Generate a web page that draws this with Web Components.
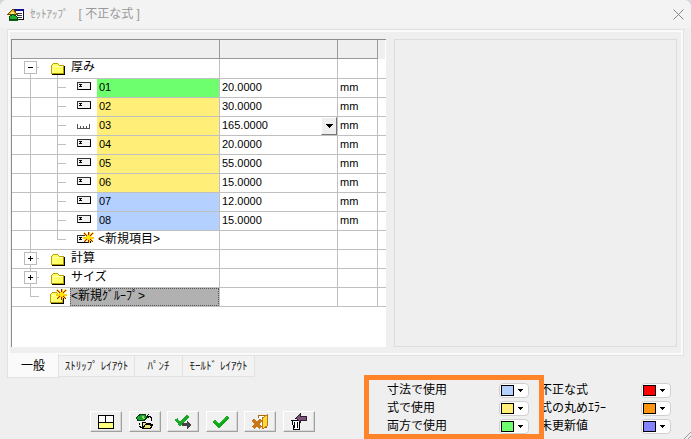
<!DOCTYPE html>
<html lang="ja">
<head>
<meta charset="utf-8">
<title>セットアップ</title>
<style>
  html, body { margin: 0; min-height: 100%; }
  body { background: #cfd8dd; font: 12px/18px "Liberation Sans", "Noto Sans CJK JP", sans-serif; color: #000; }
</style>
</head>
<body>
<setup-window></setup-window>
<script>
const BURST = '<path d="M1 1l9 9M10 1l-9 9M5.5 0v11M0 5.5h11" stroke="#ffd000" stroke-width="2"/><path d="M1 1l3 3M10 1l-3 3M1 10l3-3M10 10l-3-3M5.5 0v3M5.5 8v3" stroke="#a02000"/><rect x="4" y="4" width="3" height="3" fill="#ffe800"/>';
const FIELD = '<path d="M.5 .5h13v7h-13z" fill="#f4f4f4" stroke="#333"/><path d="M1 7.5h12.5v-7" fill="none" stroke="#000"/><path d="M2 2h1v1h-1zM4 2h1v1h-1zM3 3h1v1h-1zM2 4h3v1h-3zM3 2h1v1h-1z" fill="#000"/>';
const FOLDER = '<path d="M.5 10.5v-8l2-2h4l2 2h4v8z" fill="#ffff66" stroke="#b8a000"/><path d="M1 11.5h13M13.5 3v9" stroke="#000" fill="none"/><path d="M2 3.5h10M2 4v6" stroke="#ffffb8" fill="none"/>';

const ICONS = {
  app: [16, 13, '<path d="M6 1h10v11h-10z" fill="#111"/><path d="M8 3h7v8h-7z" fill="#fff"/><path d="M7 1h9v2h-9z" fill="#10109a"/><path d="M9 5.5h5M9 7.5h5M9 9.5h5" stroke="#334"/><path d="M0 6l5-5 4 5z" fill="#f0b020" stroke="#70500c"/><path d="M3 4h3v2h-3z" fill="#fff080"/><path d="M1 11c0-6 8-5 9 0z" fill="#20b030" stroke="#064a10"/><path d="M1 12h9" stroke="#0a6018"/>'],
  field: [14, 8, FIELD],
  ruler: [13, 5, '<path d="M.5 0v4.5h12V0M3.5 2v2M6.5 2v2M9.5 2v2" fill="none" stroke="#555"/>'],
  newfield: [17, 11, '<g transform="translate(0 2)">' + FIELD + '</g><g transform="translate(6 -1)">' + BURST + '</g>'],
  folder: [14, 12, FOLDER],
  newfolder: [17, 14, '<g transform="translate(0 2)">' + FOLDER + '</g><g transform="translate(6 -1)">' + BURST + '</g>'],
  layout: [16, 14, '<path d="M1 1h14v6h-14z" fill="#fff"/><path d="M1 7h14v6h-14z" fill="#ffff80"/><path d="M.5 .5h15v13h-15zM1 7.5h14M7.5 1v6" fill="none" stroke="#000"/>'],
  swap: [17, 16, '<path d="M0 4l4-3.5h5l2 3-3 3h-6z" fill="#20a030" stroke="#064010"/><path d="M6 2h2l1 3h-2z" fill="#90e060"/><path d="M13 0l-2 2 2 2M12 2c3 0 4 2 3 5M3.500 9v2M3.5 12l2 2" fill="none" stroke="#000"/><path d="M6.5 14.5v-6h3l1 1h4v2M6.5 14.5l3-4h7l-2 4z" fill="#e8e070" stroke="#000"/>'],
  apply: [17, 14, '<path d="M1 4l4 5 8-8" fill="none" stroke="#18a828" stroke-width="3"/><path d="M7 8v3h5v3l5-4-5-4v2z" fill="#444"/>'],
  ok: [17, 12, '<path d="M1 5l5 5 9-9" fill="none" stroke="#10a818" stroke-width="3"/><path d="M1 4l5 4 9-8" fill="none" stroke="#28b830"/>'],
  exit: [16, 16, '<path d="M6.5 4v-3h8v12h-4" fill="#fff" stroke="#a86a10"/><path d="M10 4l5-3v11l-5 3z" fill="#ffd840" stroke="#b87810"/><path d="M1 6l8 8M9 6l-8 8" stroke="#c87818" stroke-width="3"/>'],
  remove: [15, 16, '<path d="M1.5 6.5h7v9h-6zM0 6.5h10M3.5 4.5h3M3.5 8v6M6.5 8v6" fill="#fff" stroke="#000"/><path d="M5 4l4-4v2h6v4h-6v2z" fill="#80507c" stroke="#302030"/>'],
  close: [11, 11, '<path d="M.5 .5l10 10M10.5 .5l-10 10" stroke="#858585" fill="none" shape-rendering="auto"/>'],
  down: [7, 4, '<path d="M0 0h7l-3.5 4z" fill="#000"/>'],
  grip: [7, 7, '<path d="M0 7l7-7M4 7l3-3" stroke="#999" stroke-width="1" shape-rendering="auto"/>']
};

class Base extends HTMLElement {
  connectedCallback() {
    const t = document.createElement('template');
    t.innerHTML = `<style>*{box-sizing:border-box}${this.css()}</style>${this.html()}`;
    this.attachShadow({ mode: 'open' }).append(t.content.cloneNode(true));
  }
  css() { return ''; }
}

customElements.define('px-icon', class extends Base {
  css() { return ':host{display:inline-flex;flex:none} svg{display:block;overflow:visible}'; }
  html() {
    const [w, h, body] = ICONS[this.getAttribute('name')];
    return `<svg width="${w}" height="${h}" viewBox="0 0 ${w} ${h}" fill="none" shape-rendering="crispEdges" aria-hidden="true">${body}</svg>`;
  }
});

customElements.define('title-bar', class extends Base {
  css() { return `:host{display:flex;align-items:center;height:28px;margin-bottom:1px;padding:0 7px 0 8px;background:#f3f3f3;color:#999}
    h1{flex:1;margin:0 0 0 6px;font:inherit;white-space:pre} .k{font-size:11px}
    button{border:0;background:none;padding:0;display:flex}`; }
  html() { return `<px-icon name="app"></px-icon><h1><span class="k">ｾｯﾄｱｯﾌﾟ</span>   [ 不正な式 ]</h1><button aria-label="閉じる"><px-icon name="close"></px-icon></button>`; }
});

customElements.define('tree-cell', class extends Base {
  css() { return `:host{display:flex;height:100%;--l:#c0c0c0}
    .gut{display:block;flex:none;position:relative;width:45px}
    .in{width:85px} .grp{width:58px}
    .in px-icon,.grp px-icon{position:absolute}
    .in px-icon{left:65px;top:3px} .in px-icon[name=ruler]{top:7px} .in px-icon[name=newfield]{top:2px}
    .grp px-icon{left:39px;top:4px} .grp px-icon[name=newfolder]{left:38px;top:2px}
    i{position:absolute;background:var(--l)}
    .v1{left:18px;top:0;bottom:-1px;width:1px} .v2{left:45px;top:0;bottom:-1px;width:1px}
    .end .v2,.last .v1{bottom:9px}
    .v3{left:45px;top:16px;bottom:-1px;width:1px}
    .h{left:46px;top:8px;width:8px;height:1px} .g{left:19px;top:8px;width:8px;height:1px}
    .first .v1{top:9px}
    button{position:absolute;left:12px;top:2px;width:13px;height:13px;padding:0;border:1px solid #bbb;background:#fff}
    button:before,button.plus:after{content:"";position:absolute;left:3px;top:5px;width:5px;height:1px;background:#000}
    button.plus:after{left:5px;top:3px;width:1px;height:5px}
    .label{flex:1;padding-left:1px;line-height:17px;white-space:nowrap;background:var(--fill,transparent)}
    .item{padding-left:2px} .sel{background:#b1b1b1;outline:1px dotted #555;outline-offset:-1px}`; }
  html() {
    const k = this.getAttribute('kind'), s = this.getAttribute('state') || '';
    if (k === 'item') return `<span class="gut in ${s}"><i class="v1"></i><i class="v2"></i><i class="h"></i><px-icon name="${this.getAttribute('icon') || 'field'}"></px-icon></span><span class="label ${s === 'end' ? '' : 'item'}"><slot></slot></span>`;
    const tog = s === 'last' ? '' : `<button class="${s === 'first' ? '' : 'plus'}" aria-label="${s === 'first' ? '折りたたむ' : '展開'}"></button>`;
    return `<span class="gut grp ${s}"><i class="v1"></i><i class="g"></i>${s === 'first' ? '<i class="v3"></i>' : ''}${tog}<px-icon name="${s === 'last' ? 'newfolder' : 'folder'}"></px-icon></span><span class="label ${s === 'last' ? 'sel' : ''}"><slot></slot></span>`;
  }
});

customElements.define('param-grid', class extends Base {
  css() { return `:host{display:block;background:#fff;border:solid #8c8c8c;border-width:1px 0 0 1px;overflow:hidden}
    table{width:100%;border-collapse:separate;border-spacing:0;table-layout:fixed}
    .c1{width:208px}.c2{width:118px}.c3{width:40px}
    th{height:19px;padding:0;background:#efefef;border:solid #9a9a9a;border-width:0 1px 1px 0}
    th:last-child{border:0;background:linear-gradient(90deg,#efefef 7px,#fff 7px)}
    td{height:19px;padding:0;border:solid #c0c0c0;border-width:0 1px 1px 0;font-size:11px;line-height:17px;white-space:nowrap}
    td:last-child{border-right:0} tr.top td{height:20px} td:first-child{font-size:12px} td.num:first-child{font-size:11px}
    tree-cell{height:18px} .top tree-cell{height:19px}
    .v{display:flex;justify-content:space-between;padding-left:2px;height:18px} td.u{padding-left:2px;vertical-align:top}
    .v button{width:16px;height:18px;padding:0;border:1px solid;border-color:#fff #777 #777 #fff;background:#efefef;display:flex;align-items:center;justify-content:center}`; }
  html() {
    const G = '#6eff6e', Y = '#ffef78', B = '#b4d0ff';
    const rows = [['01', G, '20.0000'], ['02', Y, '30.0000'], ['03', Y, '165.0000'], ['04', Y, '20.0000'], ['05', Y, '55.0000'], ['06', Y, '15.0000'], ['07', B, '12.0000'], ['08', B, '15.0000']];
    const rest = '<td></td><td></td><td></td>';
    return `<table><colgroup><col class="c1"><col class="c2"><col class="c3"><col></colgroup>
      <thead><tr><th></th><th></th><th></th><th></th></tr></thead><tbody>
      <tr class="top"><td><tree-cell kind="group" state="first">厚み</tree-cell></td>${rest}</tr>
      ${rows.map(([n, c, v]) => `<tr><td class="num"><tree-cell kind="item" style="--fill:${c}" icon="${n === '03' ? 'ruler' : 'field'}">${n}</tree-cell></td><td><span class="v">${v}${n === '03' ? '<button aria-label="値を選択"><px-icon name="down"></px-icon></button>' : ''}</span></td><td class="u">mm</td><td></td></tr>`).join('')}
      <tr><td><tree-cell kind="item" state="end" icon="newfield">&lt;新規項目&gt;</tree-cell></td>${rest}</tr>
      <tr><td><tree-cell kind="group" state="mid">計算</tree-cell></td>${rest}</tr>
      <tr><td><tree-cell kind="group" state="mid">サイズ</tree-cell></td>${rest}</tr>
      <tr><td><tree-cell kind="group" state="last">&lt;新規ｸﾞﾙｰﾌﾟ&gt;</tree-cell></td>${rest}</tr>
      </tbody></table>`;
  }
});

customElements.define('tab-strip', class extends Base {
  css() { return `:host{display:flex;align-items:flex-start;padding-left:7px}
    button{font:11px/18px "Liberation Sans","Noto Sans CJK JP",sans-serif;height:21px;padding:0;border:solid #e2e2e2;border-width:0 1px 1px 0;background:#f3f3f3;color:#222;white-space:nowrap}
    .on{width:52px;height:24px;font-size:12px;background:#fafafa;border-left-width:1px;color:#000;margin-top:-2px;position:relative}
    .a{width:76px}.b{width:48px}.c{width:72px}`; }
  html() { return '<button class="on" role="tab" aria-selected="true">一般</button><button class="a" role="tab">ｽﾄﾘｯﾌﾟ ﾚｲｱｳﾄ</button><button class="b" role="tab">ﾊﾟﾝﾁ</button><button class="c" role="tab">ﾓｰﾙﾄﾞ ﾚｲｱｳﾄ</button>'; }
});

customElements.define('tool-bar', class extends Base {
  css() { return `:host{display:flex;justify-content:space-between;width:225px}
    button{width:32px;height:21px;padding:0;border:1px solid;border-color:#fff #a0a0a0 #a0a0a0 #fff;background:#f0f0f0;display:flex;align-items:center;justify-content:center;box-shadow:inset -1px -1px #d8d8d8}`; }
  html() { return [['layout', 'レイアウト'], ['swap', '切り替え'], ['apply', '適用'], ['ok', 'OK'], ['exit', '終了'], ['remove', '削除']].map(([i, l]) => `<button aria-label="${l}"><px-icon name="${i}"></px-icon></button>`).join(''); }
});

customElements.define('colour-row', class extends Base {
  css() { return `:host{display:flex;align-items:center;justify-content:space-between;height:18px;white-space:nowrap}
    button{width:30px;height:15px;padding:0 5px 0 1px;border:1px solid #d0d0d0;border-radius:4px;background:#fff;display:flex;align-items:center;justify-content:space-between}
    b{width:13px;height:11px;border:1px solid #000;background:var(--c)}
    svg{display:block}`; }
  html() { return '<span id="n"><slot></slot></span><button aria-labelledby="n" aria-haspopup="listbox"><b></b><svg width="5" height="3" shape-rendering="crispEdges"><path d="M0 0h5L2.5 3z"/></svg></button>'; }
});

customElements.define('colour-legend', class extends Base {
  css() { return `:host{display:flex} .hot{width:180px;height:64px;border:5px solid #ff8429;padding:1px 10px 0 18px;position:relative;z-index:1}
    .more{width:131px;padding-top:6px;margin-left:-4px}`; }
  html() { return `<div class="hot"><colour-row style="--c:#b4d0ff">寸法で使用</colour-row><colour-row style="--c:#ffef78">式で使用</colour-row><colour-row style="--c:#6eff6e">両方で使用</colour-row></div>
    <div class="more"><colour-row style="--c:#f00">不正な式</colour-row><colour-row style="--c:#ff9410">式の丸めｴﾗｰ</colour-row><colour-row style="--c:#8484ff">未更新値</colour-row></div>`; }
});

customElements.define('setup-window', class extends Base {
  css() { return `:host{display:flex;flex-direction:column;min-height:100vh;background:#efefef;border-radius:7px 7px 0 0;overflow:hidden}
    main{flex:1;display:flex;gap:8px;margin:0 7px;padding:9px 6px 8px 3px;border:1px solid #e2e2e2;box-shadow:inset 0 0 0 2px #fafafa}
    param-grid{flex:376 1 0;min-width:0} .preview{flex:282 1 0;border:1px solid #dcdcdc}
    footer{display:flex;justify-content:space-between;align-items:flex-end;padding:0 20px 0 90px;margin-top:-3px}
    tool-bar{margin-bottom:7px} .grip{position:absolute;right:0;bottom:0}`; }
  html() { return `<title-bar></title-bar><main><param-grid></param-grid><section class="preview" aria-label="プレビュー"></section></main>
    <tab-strip></tab-strip><footer><tool-bar></tool-bar><colour-legend></colour-legend></footer><px-icon class="grip" name="grip"></px-icon>`; }
});
</script>
</body>
</html>
